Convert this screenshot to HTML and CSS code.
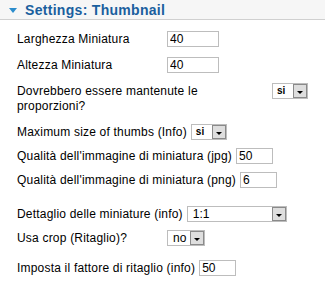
FILE: index.html
```html
<!DOCTYPE html>
<html lang="it">
<head>
    <meta charset="UTF-8">
    <title>Settings: Thumbnail</title>
    <link rel="stylesheet" href="styles.css">
</head>
<body>
    <div class="panel">
        <!-- intestazione -->
        <div class="panel-head">
            <span class="arrow"></span>
            <h3>Settings: Thumbnail</h3>
        </div>

        <div class="panel-body">
            <div class="row first">
                <label>Larghezza Miniatura</label>
                <input type="text" class="w52" value="40">
            </div>
            <div class="row">
                <label>Altezza Miniatura</label>
                <input type="text" class="w52" value="40">
            </div>
            <div class="row top">
                <label class="long">Dovrebbero essere mantenute le proporzioni?</label>
                <div class="select w36"><span class="val small">si</span><span class="btn"></span></div>
            </div>
            <div class="row">
                <label>Maximum size of thumbs (Info)</label>
                <div class="select w36"><span class="val small">si</span><span class="btn"></span></div>
            </div>
            <div class="row tight">
                <label>Qualità dell'immagine di miniatura (jpg)</label>
                <input type="text" class="w37" value="50">
            </div>
            <div class="row tight">
                <label>Qualità dell'immagine di miniatura (png)</label>
                <input type="text" class="w37" value="6">
            </div>
            <div class="row wide">
                <label>Dettaglio delle miniature (info)</label>
                <div class="select w100"><span class="val">1:1</span><span class="btn"></span></div>
            </div>
            <div class="row tight">
                <label>Usa crop (Ritaglio)?</label>
                <div class="select w38"><span class="val">no</span><span class="btn"></span></div>
            </div>
            <div class="row mid">
                <label>Imposta il fattore di ritaglio (info)</label>
                <input type="text" class="w37" value="50">
            </div>
        </div>
    </div>
</body>
</html>
```

FILE: styles.css
```css
/* base */
body {
    margin: 0;
    background: #fff;
    font-family: "Liberation Sans", Arial, sans-serif;
    font-size: 12px;
    color: #000;
}

/* header */
.panel-head {
    display: flex;
    align-items: center;
    height: 19px;
    background: #f6f6f6;
    border-bottom: 1px solid #d0d0d0;
    padding-left: 9px;
}

.arrow {
    width: 0;
    height: 0;
    border-left: 4px solid transparent;
    border-right: 4px solid transparent;
    border-top: 5px solid #2b8ccc;
    margin-right: 8px;
    margin-top: 1px;
}

.panel-head h3 {
    margin: 0;
    font-size: 14px;
    font-weight: bold;
    letter-spacing: 0.3px;
    color: #1a5f9e;
}

/* rows */
.panel-body {
    padding: 0 0 0 17px;
}

.row {
    display: flex;
    align-items: center;
    gap: 4px;
    margin-top: 10px;
}

.row.first { margin-top: 11px; }
.row.tight { margin-top: 8px; }
.row.wide { margin-top: 18px; }
.row.mid { margin-top: 14px; }
.row.top { align-items: flex-start; }

.row label {
    min-width: 146px;
    line-height: 15px;
    letter-spacing: 0.2px;
}

.row label.long {
    width: 251px;
    margin-top: 1px;
}

/* fields */
input {
    box-sizing: border-box;
    height: 16px;
    border: 1px solid #bdbdbd;
    padding: 0 2px;
    font-family: inherit;
    font-size: 12px;
    color: #000;
    outline: none;
}

.w52 { width: 52px; }
.w37 { width: 37px; }
.w36 { width: 36px; }
.w38 { width: 38px; }
.w100 { width: 100px; }

.select {
    box-sizing: border-box;
    display: flex;
    align-items: center;
    height: 16px;
    border: 1px solid #bdbdbd;
    background: #fff;
}

.select .val {
    flex: 1;
    padding-left: 5px;
    font-size: 12px;
    line-height: 14px;
}

.select .val.small {
    font-size: 10px;
    font-weight: bold;
    padding-left: 4px;
}

.select .btn {
    position: relative;
    box-sizing: border-box;
    width: 14px;
    height: 14px;
    background: #dedede;
    border: 1px solid #8a8a8a;
}

.select .btn::after {
    content: "";
    position: absolute;
    left: 3px;
    top: 6px;
    border-left: 3px solid transparent;
    border-right: 3px solid transparent;
    border-top: 3px solid #000;
}
```
